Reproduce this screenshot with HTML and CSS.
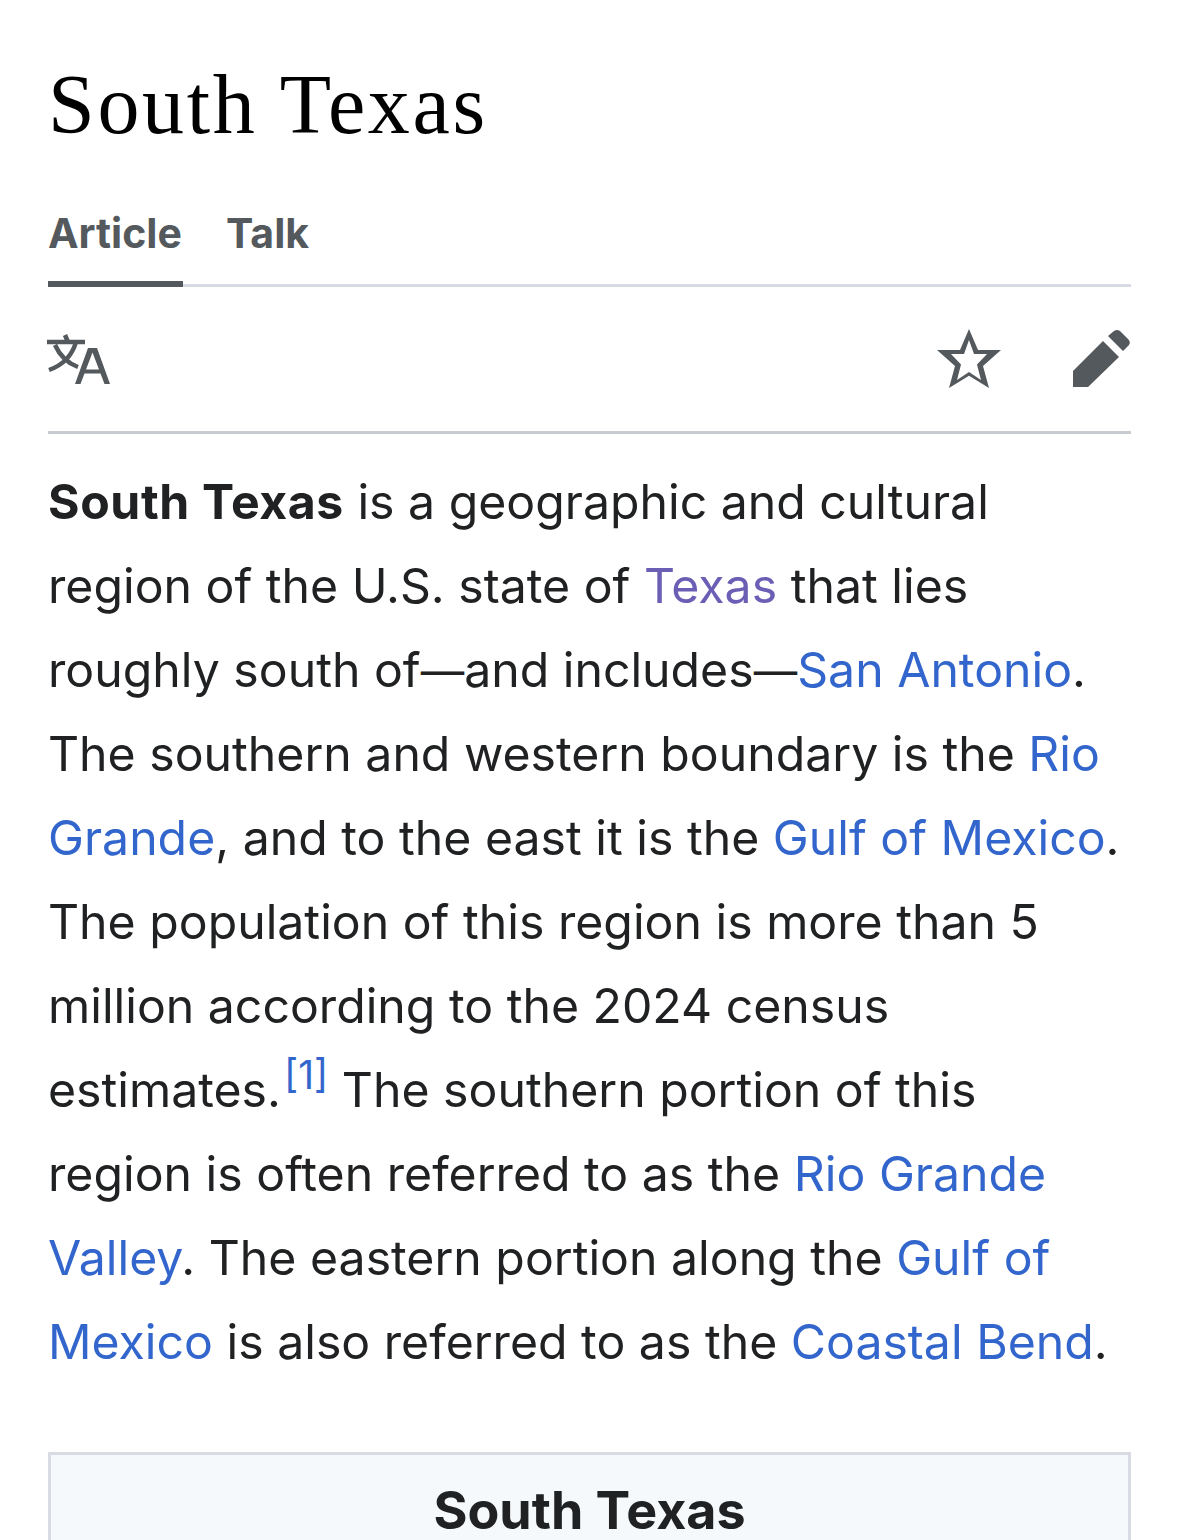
FILE: index.html
```html
<!DOCTYPE html>
<html lang="en">
    <head>
        <meta charset="utf-8" />
        <title>South Texas</title>
        <link rel="stylesheet" href="styles.css">
    </head>
    <body>
        <div class="wrapper">
            <h1 class="pageTitle">South Texas</h1>
            <div class="tabs">
                <a class="tab tabActive">Article</a>
                <a class="tab">Talk</a>
            </div>
            <div class="actions">
                <svg class="iconLang" width="64" height="50" viewBox="0 0 64 50">
                    <path d="M0 8H38M18 1L21 8M29 8C25 22 16 31 2 36M8 11C13 22 20 29 31 33" fill="none" stroke="#54595d" stroke-width="4.500"/>
                    <path d="M28 50L41 14H50L63 50H57.500L53.500 39.500H37.500L33.500 50ZM39 35.500H52L45.500 18.500Z" fill="#54595d" fill-rule="evenodd"/>
                </svg>
                <div class="actionsRight">
                    <svg class="iconStar" width="64" height="60" viewBox="0 0 64 60">
                        <path d="M32 0L41 21H64L46 37L52 59L32 46.700L12 59L18 37L0 21H23ZM32 11L27 25H14L24 35.500L20 51L32 43L44 51L40 35.500L50 25H37Z" fill="#54595d" fill-rule="evenodd"/>
                    </svg>
                    <svg class="iconEdit" width="60" height="60" viewBox="0 0 60 60">
                        <path d="M2 58V42L32 12L48 28L17 58ZM37 7L43 2Q46 0 49 2L57 10Q60 13 58 16L52 22Z" fill="#54595d"/>
                    </svg>
                </div>
            </div>
            <p class="lead"><b>South Texas</b> is a geographic and cultural<br>
            region of the U.S. state of <a class="visited">Texas</a> that lies<br>
            roughly south of<span class="dash">—</span>and includes<span class="dash">—</span><a>San Antonio</a>.<br>
            The southern and western boundary is the <a>Rio<br>
            Grande</a>, and to the east it is the <a>Gulf of Mexico</a>.<br>
            The population of this region is more than 5<br>
            million according to the 2024 census<br>
            estimates.<sup class="ref"><a>[1]</a></sup> The southern portion of this<br>
            region is often referred to as the <a>Rio Grande<br>
            Valley</a>. The eastern portion along the <a>Gulf of<br>
            Mexico</a> is also referred to as the <a>Coastal Bend</a>.</p>
            <div class="infobox">
                <div class="infoboxTitle">South Texas</div>
            </div>
        </div>
    </body>
</html>
```

FILE: styles.css
```css
html, body {
    margin: 0;
    height: 1540px;
    overflow: hidden;
    background-color: #fff;
    color: #202122;
    font-family: Inter, "Liberation Sans", sans-serif;
}

.wrapper {
    padding: 0 48px;
}

.pageTitle {
    margin: 0;
    padding: 59px 0 0;
    font-family: "Liberation Serif", serif;
    font-weight: normal;
    font-size: 84px;
    letter-spacing: 2.700px;
    line-height: 92px;
    color: #000;
}

.tabs {
    display: flex;
    gap: 43px;
    margin-top: 38px;
    height: 98px;
    box-sizing: border-box;
    border-bottom: 3px solid #d8dbe4;
}

.tab {
    padding: 18px 0 0;
    font-size: 41px;
    line-height: 52px;
    font-weight: 700;
    color: #54595d;
}

.tabActive {
    width: 135px;
    height: 98px;
    box-sizing: border-box;
    border-bottom: 6px solid #54595d;
}

.actions {
    display: flex;
    justify-content: space-between;
    align-items: center;
    height: 144px;
    border-bottom: 3px solid #c8ccd1;
}

.iconLang {
    margin-left: -1px;
}

.actionsRight {
    display: flex;
    gap: 70px;
}

.lead {
    margin: 26px 0 0;
    font-size: 48.200px;
    line-height: 84px;
    white-space: nowrap;
}

.lead b {
    letter-spacing: 0.600px;
}

.lead a {
    color: #3366cc;
}

.lead a.visited {
    color: #6b5fb5;
}

.dash {
    font-size: 43.500px;
    line-height: 0;
}

.ref {
    margin-left: 3px;
    font-size: 39px;
    line-height: 0;
    vertical-align: 18px;
}

.infobox {
    margin-top: 68px;
    height: 200px;
    border: 3px solid #d8dbe4;
    background-color: #f6f9fb;
}

.infoboxTitle {
    padding-top: 26px;
    text-align: center;
    font-size: 52px;
    line-height: 60px;
    font-weight: 700;
}
```
